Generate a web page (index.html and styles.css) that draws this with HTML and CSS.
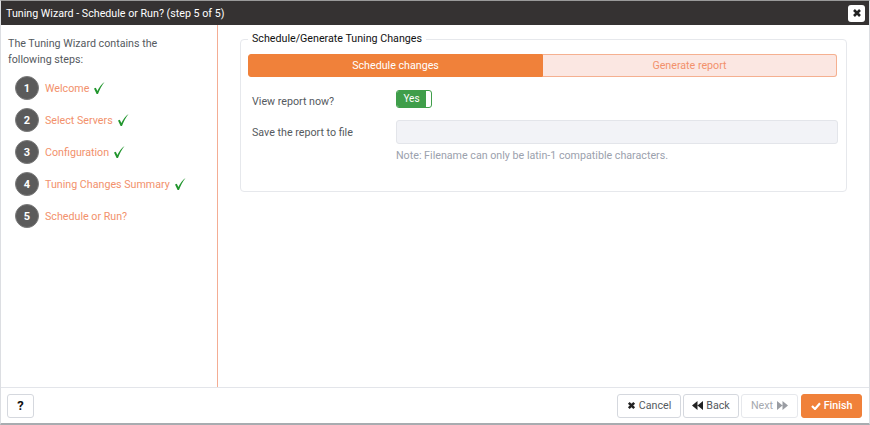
FILE: index.html
```html
<!DOCTYPE html>
<html>
<head>
	<title>Tuning Wizard</title>
	<link rel="stylesheet" href="styles.css">
</head>
<body>
	<div class="dialog">
		<div class="titlebar">
			<span class="title">Tuning Wizard - Schedule or Run? (step 5 of 5)</span>
			<button class="close-btn">
				<svg class="ico" width="10" height="10" viewBox="0 0 10 10"><path d="M2 2L8 8M8 2L2 8" stroke="#222" stroke-width="2.6" fill="none"/></svg>
			</button>
		</div>
		<div class="content">
			<div class="sidebar">
				<p class="intro">The Tuning Wizard contains the<br>following steps:</p>
				<ul class="steps">
					<li class="step"><span class="num">1</span><span class="step-name">Welcome</span>
						<svg class="check" width="12" height="14" viewBox="0 0 12 14"><path d="M1 7.5L2.8 6.8L4.4 10C6 6.5 8.5 3 11.5 1C8.8 4.5 6.4 9 5 13H3.6Z" fill="#22962e"/></svg></li>
					<li class="step"><span class="num">2</span><span class="step-name">Select Servers</span>
						<svg class="check" width="12" height="14" viewBox="0 0 12 14"><path d="M1 7.5L2.8 6.8L4.4 10C6 6.5 8.5 3 11.5 1C8.8 4.5 6.4 9 5 13H3.6Z" fill="#22962e"/></svg></li>
					<li class="step"><span class="num">3</span><span class="step-name">Configuration</span>
						<svg class="check" width="12" height="14" viewBox="0 0 12 14"><path d="M1 7.5L2.8 6.8L4.4 10C6 6.5 8.5 3 11.5 1C8.8 4.5 6.4 9 5 13H3.6Z" fill="#22962e"/></svg></li>
					<li class="step"><span class="num">4</span><span class="step-name">Tuning Changes Summary</span>
						<svg class="check" width="12" height="14" viewBox="0 0 12 14"><path d="M1 7.5L2.8 6.8L4.4 10C6 6.5 8.5 3 11.5 1C8.8 4.5 6.4 9 5 13H3.6Z" fill="#22962e"/></svg></li>
					<li class="step"><span class="num">5</span><span class="step-name">Schedule or Run?</span></li>
				</ul>
			</div>
			<div class="main">
				<fieldset class="group">
					<legend>Schedule/Generate Tuning Changes</legend>
					<div class="tabs">
						<div class="tab tab-active">Schedule changes</div>
						<div class="tab">Generate report</div>
					</div>
					<div class="row row-toggle">
						<label class="row-label">View report now?</label>
						<div class="toggle"><span class="toggle-on">Yes</span><span class="toggle-handle"></span></div>
					</div>
					<div class="row">
						<label class="row-label">Save the report to file</label>
						<input class="text-input" type="text" disabled>
					</div>
					<div class="note">Note: Filename can only be latin-1 compatible characters.</div>
				</fieldset>
			</div>
		</div>
		<div class="footer">
			<button class="btn btn-help">?</button>
			<div class="footer-right">
				<button class="btn btn-cancel">
					<svg class="ico" width="9" height="9" viewBox="0 0 10 10"><path d="M2 2L8 8M8 2L2 8" stroke="#222" stroke-width="2.8" fill="none"/></svg>Cancel</button>
				<button class="btn btn-back">
					<svg class="ico" width="11" height="9" viewBox="0 0 11 9"><path d="M5.5 0V9L0 4.5ZM11 0V9L5.5 4.5Z" fill="#222"/></svg>Back</button>
				<button class="btn btn-next" disabled>Next
					<svg class="ico" width="11" height="9" viewBox="0 0 11 9"><path d="M0 0V9L5.5 4.5ZM5.5 0V9L11 4.5Z" fill="#9a9da3"/></svg></button>
				<button class="btn btn-finish">
					<svg class="ico" width="10" height="8" viewBox="0 0 10 8"><path d="M1 4L4 7L9 1.2" stroke="#fff" stroke-width="2.2" fill="none"/></svg>Finish</button>
			</div>
		</div>
	</div>
</body>
</html>
```

FILE: styles.css
```css
* {
	box-sizing: border-box;
}

html, body {
	margin: 0;
	height: 100%;
}

body {
	font-family: Roboto, "Liberation Sans", sans-serif;
	font-size: 10.7px;
	color: #555a60;
	background-color: #fff;
	overflow: hidden;
}

.dialog {
	display: flex;
	flex-direction: column;
	height: 425px;
	border: 1px solid #dcdee2;
	border-top: 1px solid #9a9a9a;
	border-bottom: 2px solid #a8acb0;
}

.titlebar {
	display: flex;
	align-items: center;
	justify-content: space-between;
	height: 24px;
	padding: 0 4px 0 5px;
	background-color: #353232;
	color: #fff;
	font-size: 10.7px;
	flex: none;
}

.close-btn {
	display: flex;
	align-items: center;
	justify-content: center;
	width: 17px;
	height: 17px;
	padding: 0;
	border: 0;
	border-radius: 3px;
	background-color: #fff;
}

.content {
	display: flex;
	flex: 1;
	min-height: 0;
}

.sidebar {
	width: 217px;
	flex: none;
	padding: 11px 7px;
	border-right: 1px solid #f4ad94;
}

.intro {
	margin: 0 0 8px 0;
	line-height: 16px;
}

.steps {
	list-style: none;
	margin: 0;
	padding: 0 0 0 7px;
}

.step {
	display: flex;
	align-items: center;
	height: 24px;
	margin-bottom: 8px;
	color: #f2916c;
}

.num {
	display: flex;
	align-items: center;
	justify-content: center;
	width: 24px;
	height: 24px;
	margin-right: 6px;
	border-radius: 50%;
	background-color: #5b5b5b;
	border: 1px solid #7b7b7b;
	color: #fff;
	font-weight: bold;
	font-size: 11px;
}

.check {
	margin-left: 4px;
}

.main {
	flex: 1;
	padding: 7px 22px 0 22px;
}

.group {
	height: 160px;
	margin: 0;
	padding: 8px 9px 0 7px;
	border: 1px solid #e6e8ec;
	border-radius: 4px;
}

.group legend {
	padding: 0 4px;
	margin-left: 0;
	color: #111;
	line-height: 14px;
}

.tabs {
	display: flex;
	height: 23px;
}

.tab {
	flex: 1;
	display: flex;
	align-items: center;
	justify-content: center;
	background-color: #fbe7e2;
	border: 1px solid #f5b090;
	border-left: 0;
	border-radius: 0 3px 3px 0;
	color: #f2916c;
}

.tab-active {
	background-color: #f0813a;
	border: 1px solid #f0813a;
	border-radius: 3px 0 0 3px;
	color: #fff;
}

.row {
	display: flex;
	align-items: center;
	height: 24px;
	margin-top: 12px;
	padding-left: 4px;
}

.row-toggle {
	height: 18px;
	margin-top: 13px;
}

.row-toggle .row-label {
	padding-top: 4px;
}

.row-label {
	width: 144px;
	flex: none;
}

.toggle {
	display: flex;
	width: 36px;
	height: 18px;
	border: 1px solid #3f9e4a;
	border-radius: 3px;
	overflow: hidden;
	background-color: #fff;
}

.toggle-on {
	flex: 1;
	text-align: center;
	line-height: 15px;
	background-color: #3f9e4a;
	color: #fff;
	font-size: 10px;
}

.toggle-handle {
	width: 5px;
	flex: none;
}

.text-input {
	flex: 1;
	height: 24px;
	margin-right: -1px;
	border: 1px solid #e3e5ea;
	border-radius: 3px;
	background-color: #f2f3f7;
}

.note {
	margin: 4px 0 0 148px;
	line-height: 15px;
	color: #9ba1ad;
}

.footer {
	display: flex;
	align-items: center;
	justify-content: space-between;
	height: 36px;
	flex: none;
	padding: 0 7px 0 6px;
	border-top: 1px solid #e3e5ea;
}

.footer-right {
	display: flex;
	gap: 2px;
}

.btn {
	display: flex;
	align-items: center;
	justify-content: center;
	height: 24px;
	padding: 0;
	border: 1px solid #d5d8de;
	border-radius: 3px;
	background-color: #fff;
	color: #555a60;
	font-family: inherit;
	font-size: 10.7px;
}

.btn .ico {
	margin-right: 3px;
}

.btn-help {
	width: 27px;
	color: #111;
	font-weight: bold;
	font-size: 13px;
}

.btn-cancel {
	width: 64px;
}

.btn-back {
	width: 56px;
}

.btn-next {
	width: 57px;
	color: #a5a8ae;
	border-color: #e6e8ec;
}

.btn-next .ico {
	margin: 0 0 0 4px;
}

.btn-finish {
	width: 61px;
	margin-left: 1px;
	background-color: #f0813a;
	border-color: #f0813a;
	color: #fff;
	font-weight: 500;
}
```
